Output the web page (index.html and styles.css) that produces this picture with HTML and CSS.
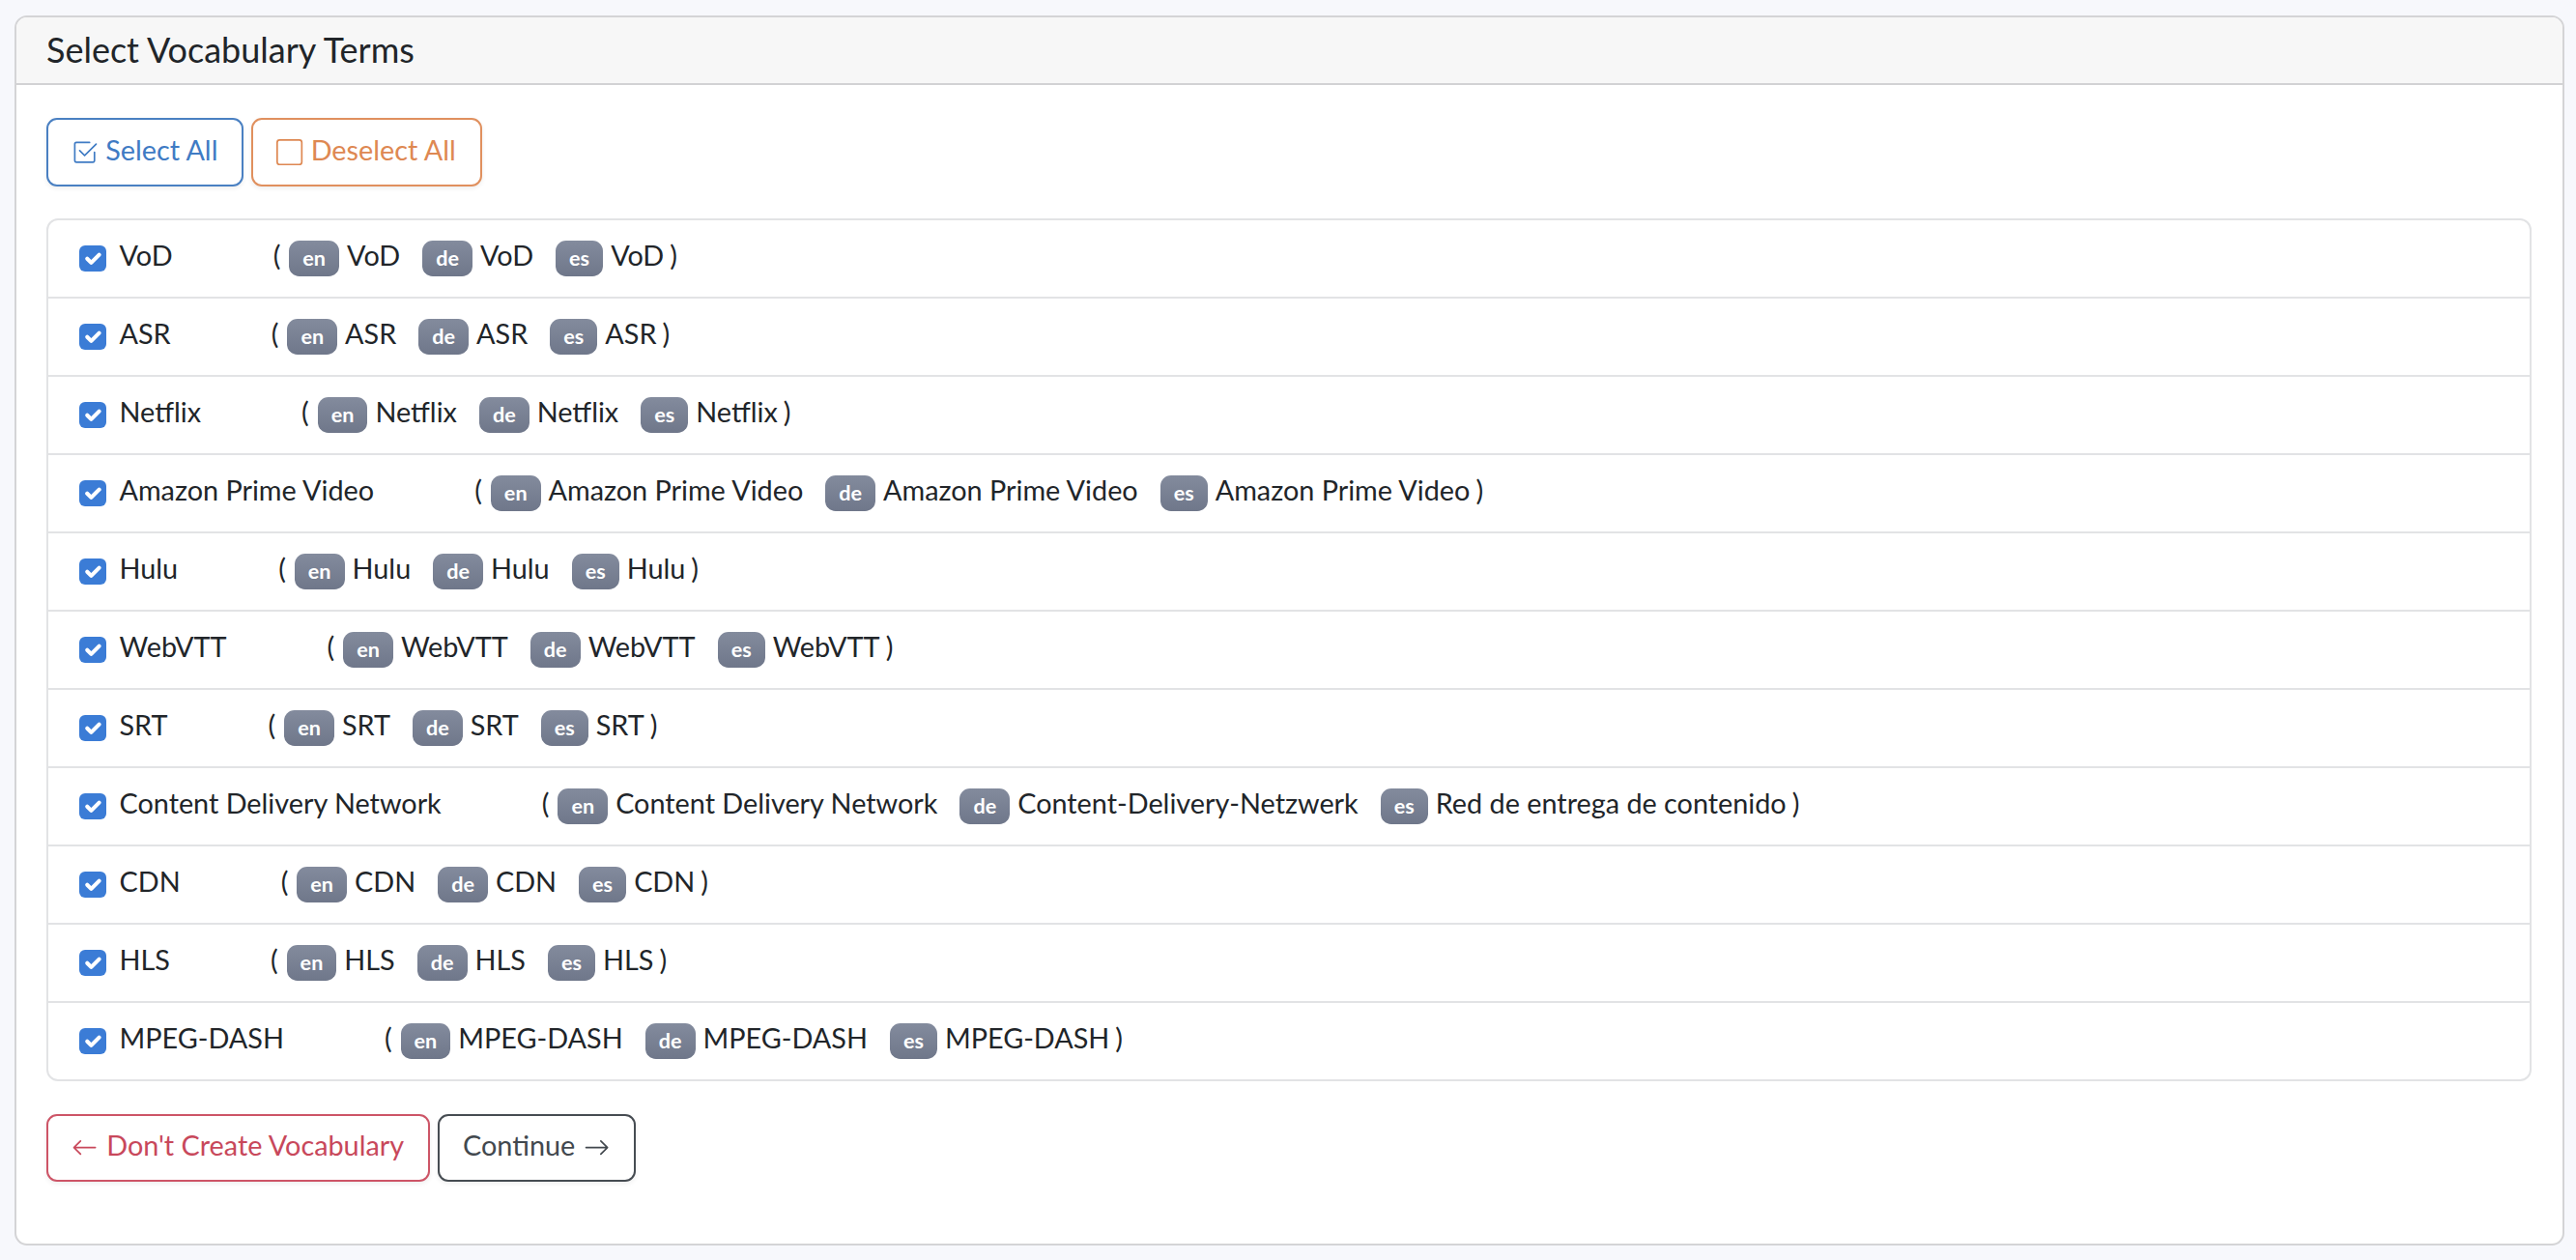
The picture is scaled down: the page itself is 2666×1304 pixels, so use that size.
FILE: index.html
```html
<!DOCTYPE html>
<html lang="en">
<head>
<meta charset="utf-8">
<title>Select Vocabulary Terms</title>
<link rel="stylesheet" href="styles.css">
</head>
<body>
<div class="page">
  <div class="card">
    <div class="card-header">Select Vocabulary Terms</div>
    <div class="card-body">
      <div class="btn-row">
        <button class="btn btn-blue"><svg class="ico" viewBox="0 0 16 16" fill="currentColor"><path d="M3 14.5A1.5 1.5 0 0 1 1.5 13V3A1.5 1.5 0 0 1 3 1.5h8a.5.5 0 0 1 0 1H3a.5.5 0 0 0-.5.5v10a.5.5 0 0 0 .5.5h10a.5.5 0 0 0 .5-.5V8a.5.5 0 0 1 1 0v5a1.5 1.5 0 0 1-1.5 1.5z"/><path d="m8.354 10.354 7-7a.5.5 0 0 0-.708-.708L8 9.293 5.354 6.646a.5.5 0 1 0-.708.708l3 3a.5.5 0 0 0 .708 0"/></svg><span class="lbl">Select All</span></button>
        <button class="btn btn-orange"><svg class="ico" viewBox="0 0 16 16" fill="currentColor"><path d="M14 1a1 1 0 0 1 1 1v12a1 1 0 0 1-1 1H2a1 1 0 0 1-1-1V2a1 1 0 0 1 1-1zM2 0a2 2 0 0 0-2 2v12a2 2 0 0 0 2 2h12a2 2 0 0 0 2-2V2a2 2 0 0 0-2-2z"/></svg><span class="lbl">Deselect All</span></button>
      </div>

      <ul class="terms">
        <li class="term-row"><span class="check"><svg viewBox="0 0 20 20"><path d="m6 10 3 3 6-6"/></svg></span><span class="term">VoD</span><span class="trans"><span class="paren">(</span><span class="pair"><span class="badge">en</span><span class="txt">VoD</span></span><span class="pair"><span class="badge">de</span><span class="txt">VoD</span></span><span class="pair"><span class="badge">es</span><span class="txt">VoD</span></span><span class="paren">)</span></span></li>
        <li class="term-row"><span class="check"><svg viewBox="0 0 20 20"><path d="m6 10 3 3 6-6"/></svg></span><span class="term">ASR</span><span class="trans"><span class="paren">(</span><span class="pair"><span class="badge">en</span><span class="txt">ASR</span></span><span class="pair"><span class="badge">de</span><span class="txt">ASR</span></span><span class="pair"><span class="badge">es</span><span class="txt">ASR</span></span><span class="paren">)</span></span></li>
        <li class="term-row"><span class="check"><svg viewBox="0 0 20 20"><path d="m6 10 3 3 6-6"/></svg></span><span class="term">Netflix</span><span class="trans"><span class="paren">(</span><span class="pair"><span class="badge">en</span><span class="txt">Netflix</span></span><span class="pair"><span class="badge">de</span><span class="txt">Netflix</span></span><span class="pair"><span class="badge">es</span><span class="txt">Netflix</span></span><span class="paren">)</span></span></li>
        <li class="term-row"><span class="check"><svg viewBox="0 0 20 20"><path d="m6 10 3 3 6-6"/></svg></span><span class="term">Amazon Prime Video</span><span class="trans"><span class="paren">(</span><span class="pair"><span class="badge">en</span><span class="txt">Amazon Prime Video</span></span><span class="pair"><span class="badge">de</span><span class="txt">Amazon Prime Video</span></span><span class="pair"><span class="badge">es</span><span class="txt">Amazon Prime Video</span></span><span class="paren">)</span></span></li>
        <li class="term-row"><span class="check"><svg viewBox="0 0 20 20"><path d="m6 10 3 3 6-6"/></svg></span><span class="term">Hulu</span><span class="trans"><span class="paren">(</span><span class="pair"><span class="badge">en</span><span class="txt">Hulu</span></span><span class="pair"><span class="badge">de</span><span class="txt">Hulu</span></span><span class="pair"><span class="badge">es</span><span class="txt">Hulu</span></span><span class="paren">)</span></span></li>
        <li class="term-row"><span class="check"><svg viewBox="0 0 20 20"><path d="m6 10 3 3 6-6"/></svg></span><span class="term">WebVTT</span><span class="trans"><span class="paren">(</span><span class="pair"><span class="badge">en</span><span class="txt">WebVTT</span></span><span class="pair"><span class="badge">de</span><span class="txt">WebVTT</span></span><span class="pair"><span class="badge">es</span><span class="txt">WebVTT</span></span><span class="paren">)</span></span></li>
        <li class="term-row"><span class="check"><svg viewBox="0 0 20 20"><path d="m6 10 3 3 6-6"/></svg></span><span class="term">SRT</span><span class="trans"><span class="paren">(</span><span class="pair"><span class="badge">en</span><span class="txt">SRT</span></span><span class="pair"><span class="badge">de</span><span class="txt">SRT</span></span><span class="pair"><span class="badge">es</span><span class="txt">SRT</span></span><span class="paren">)</span></span></li>
        <li class="term-row"><span class="check"><svg viewBox="0 0 20 20"><path d="m6 10 3 3 6-6"/></svg></span><span class="term">Content Delivery Network</span><span class="trans"><span class="paren">(</span><span class="pair"><span class="badge">en</span><span class="txt">Content Delivery Network</span></span><span class="pair"><span class="badge">de</span><span class="txt">Content-Delivery-Netzwerk</span></span><span class="pair"><span class="badge">es</span><span class="txt">Red de entrega de contenido</span></span><span class="paren">)</span></span></li>
        <li class="term-row"><span class="check"><svg viewBox="0 0 20 20"><path d="m6 10 3 3 6-6"/></svg></span><span class="term">CDN</span><span class="trans"><span class="paren">(</span><span class="pair"><span class="badge">en</span><span class="txt">CDN</span></span><span class="pair"><span class="badge">de</span><span class="txt">CDN</span></span><span class="pair"><span class="badge">es</span><span class="txt">CDN</span></span><span class="paren">)</span></span></li>
        <li class="term-row"><span class="check"><svg viewBox="0 0 20 20"><path d="m6 10 3 3 6-6"/></svg></span><span class="term">HLS</span><span class="trans"><span class="paren">(</span><span class="pair"><span class="badge">en</span><span class="txt">HLS</span></span><span class="pair"><span class="badge">de</span><span class="txt">HLS</span></span><span class="pair"><span class="badge">es</span><span class="txt">HLS</span></span><span class="paren">)</span></span></li>
        <li class="term-row"><span class="check"><svg viewBox="0 0 20 20"><path d="m6 10 3 3 6-6"/></svg></span><span class="term">MPEG-DASH</span><span class="trans"><span class="paren">(</span><span class="pair"><span class="badge">en</span><span class="txt">MPEG-DASH</span></span><span class="pair"><span class="badge">de</span><span class="txt">MPEG-DASH</span></span><span class="pair"><span class="badge">es</span><span class="txt">MPEG-DASH</span></span><span class="paren">)</span></span></li>
      </ul>

      <div class="btn-row bottom">
        <button class="btn btn-red"><svg class="ico arrow" viewBox="0 0 16 16" fill="currentColor"><path fill-rule="evenodd" d="M15 8a.5.5 0 0 0-.5-.5H2.707l3.147-3.146a.5.5 0 1 0-.708-.708l-4 4a.5.5 0 0 0 0 .708l4 4a.5.5 0 0 0 .708-.708L2.707 8.5H14.5A.5.5 0 0 0 15 8"/></svg><span class="lbl">Don't Create Vocabulary</span></button>
        <button class="btn btn-dark"><span class="lbl">Continue</span><svg class="ico arrow-r" viewBox="0 0 16 16" fill="currentColor"><path fill-rule="evenodd" d="M1 8a.5.5 0 0 1 .5-.5h11.793l-3.147-3.146a.5.5 0 0 1 .708-.708l4 4a.5.5 0 0 1 0 .708l-4 4a.5.5 0 0 1-.708-.708L13.293 8.5H1.5A.5.5 0 0 1 1 8"/></svg></button>
      </div>
    </div>
  </div>
</div>
</body>
</html>
```

FILE: styles.css
```css
* { box-sizing: border-box; }

html, body {
  margin: 0;
  padding: 0;
  background: #f7f8fc;
}

body {
  font-family: "Lato", "Open Sans", "Liberation Sans", sans-serif;
  font-size: 28.8px;
  color: #212529;
}

.page {
  padding: 16px 12px 16px 15px;
}

.card {
  background: #fff;
  border: 2px solid #d4d4d6;
  border-radius: 13px;
  overflow: hidden;
}

.card-header {
  height: 70px;
  display: flex;
  align-items: center;
  padding: 0 31px 2px 31px;
  background: #f7f7f7;
  border-bottom: 2px solid #d2d2d4;
  font-size: 36px;
  color: #212529;
}

.card-body {
  padding: 34px 32px 64px 31px;
}

.btn-row {
  display: flex;
  gap: 8px;
}

.btn {
  display: inline-flex;
  align-items: center;
  height: 71px;
  padding: 0 25px 0 24px;
  background: #fff;
  border: 2px solid;
  border-radius: 11px;
  font-family: inherit;
  font-size: 28.8px;
  line-height: 43px;
  box-shadow: 0 2px 5px rgba(0, 0, 0, 0.07);
  cursor: pointer;
}

.lbl {
  padding-bottom: 5px;
}

.ico {
  width: 27.2px;
  height: 27.2px;
  margin-right: 8px;
  flex: none;
}

.arrow { margin-right: 9px; }
.arrow-r { margin-right: 0; margin-left: 9px; }

.btn-blue { color: #3f7bc4; border-color: #4a80c2; }
.btn-orange { color: #de8852; border-color: #e0905e; }
.btn-red { color: #c8485b; border-color: #cd5567; }
.btn-dark { color: #42484e; border-color: #464c52; }

.bottom .btn { height: 70px; }

.terms {
  list-style: none;
  margin: 33px 0 34px 0;
  padding: 0;
  border: 2px solid #e2e3e5;
  border-radius: 12px;
}

.term-row {
  display: flex;
  align-items: center;
  height: 81px;
  padding: 0 30px 0 32px;
  border-top: 2px solid #e2e3e5;
}

.term-row:first-child {
  border-top: none;
  height: 79px;
}

.check {
  width: 27.5px;
  height: 27.5px;
  flex: none;
  border-radius: 6px;
  background: #3b7cd6;
  display: flex;
  align-items: center;
  justify-content: center;
  margin-right: 14px;
}

.check svg {
  width: 100%;
  height: 100%;
  fill: none;
  stroke: #fff;
  stroke-width: 3;
  stroke-linecap: round;
  stroke-linejoin: round;
}

.term,
.txt,
.paren {
  white-space: nowrap;
  padding-bottom: 8px;
}

.trans {
  display: inline-flex;
  align-items: center;
  margin-left: 104px;
  white-space: nowrap;
}

.paren:first-child { margin-right: 9px; }
.paren:last-child { margin-left: 6px; }

.pair {
  display: inline-flex;
  align-items: center;
  gap: 8px;
}

.pair + .pair { margin-left: 23px; }

.badge {
  display: inline-block;
  padding: 7.5px 14px;
  font-size: 21.6px;
  font-weight: 700;
  line-height: 1;
  color: #fff;
  border-radius: 10.8px;
  background: linear-gradient(180deg, #838b9d 0%, #6f778a 100%);
}
```
